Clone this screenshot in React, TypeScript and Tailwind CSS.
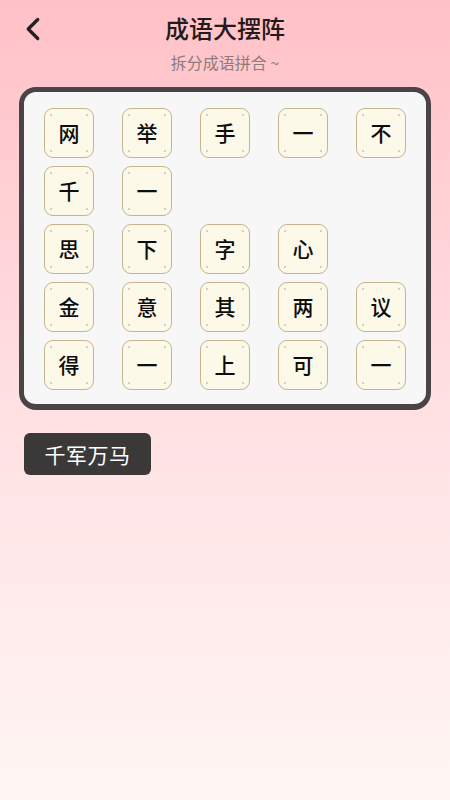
import { ChevronLeft } from "lucide-react";

const rows: string[][] = [
    ["网", "举", "手", "一", "不"],
    ["千", "一"],
    ["思", "下", "字", "心"],
    ["金", "意", "其", "两", "议"],
    ["得", "一", "上", "可", "一"],
];

function Tile({ ch }: { ch: string }) {
    return (
        <div className="relative w-[50px] h-[50px] rounded-[9px] border-[1.5px] border-[#c6b390] bg-[#fdf9e9] flex items-center justify-center text-[21px] font-medium text-[#0d0d0d]">
            <span className="absolute left-[5px] top-[5px] w-[2px] h-[2px] rounded-full bg-[#cbc2b2]" />
            <span className="absolute right-[5px] top-[5px] w-[2px] h-[2px] rounded-full bg-[#cbc2b2]" />
            <span className="absolute left-[5px] bottom-[5px] w-[2px] h-[2px] rounded-full bg-[#cbc2b2]" />
            <span className="absolute right-[5px] bottom-[5px] w-[2px] h-[2px] rounded-full bg-[#cbc2b2]" />
            {ch}
        </div>
    );
}

export default function App() {
    return (
        <div
            className="min-h-[800px] w-[450px] bg-gradient-to-b from-[#ffc1c7] via-[#ffe0e3] to-[#fff6f4]"
            style={{ fontFamily: '"Noto Sans CJK SC", "Noto Sans", sans-serif' }}
        >
            <header className="grid grid-cols-[1fr_auto_1fr] items-start pt-[9px] h-[81px]">
                <button className="justify-self-start ml-[14px] mt-[1px] text-[#222]">
                    <ChevronLeft className="w-[38px] h-[38px]" strokeWidth={2.1} />
                </button>
                <div className="flex flex-col items-center">
                    <h1 className="text-[24px] leading-[38px] font-medium text-[#231a1a]">成语大摆阵</h1>
                    <p className="mt-[4px] text-[16px] leading-[22px] text-[#8c7c7e]">拆分成语拼合 ~</p>
                </div>
                <div />
            </header>

            <div className="mx-[19px] mt-[6px] rounded-[17px] border-[5px] border-b-[6px] border-[#4a4446] bg-[#f7f7f7] pl-[20px] pt-[16px] pb-[14px]">
                <div className="flex flex-col gap-[8px]">
                    {rows.map((row, i) => (
                        <div key={i} className="flex gap-[28px]">
                            {row.map((ch, j) => (
                                <Tile key={j} ch={ch} />
                            ))}
                        </div>
                    ))}
                </div>
            </div>

            <div className="mt-[23px] ml-[24px]">
                <button className="w-[127px] h-[42px] rounded-[6px] bg-[#3b3838] text-white text-[21px] leading-none tracking-[0.5px]">
                    千军万马
                </button>
            </div>
        </div>
    );
}
